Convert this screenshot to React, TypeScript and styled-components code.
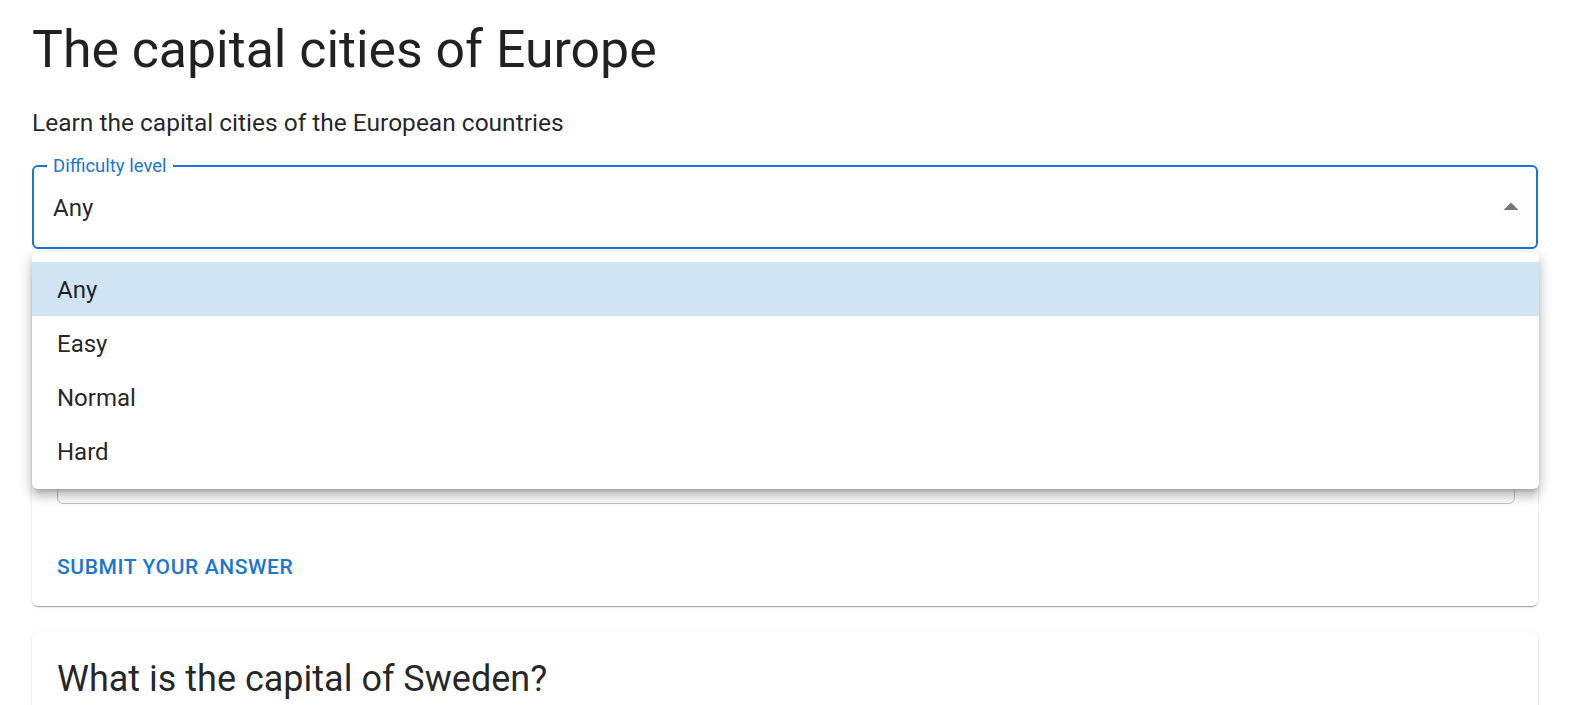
import React from "react";
import styled, { createGlobalStyle } from "styled-components";

const GlobalStyle = createGlobalStyle`
  html, body { margin: 0; padding: 0; background: #fff; overflow: hidden; }
  body { font-family: Roboto, "Liberation Sans", Arial, sans-serif; color: rgba(0,0,0,0.87); }
  * { box-sizing: border-box; }
`;

const Page = styled.main`
  padding: 20px 31px 0 32px;
  display: flex;
  flex-direction: column;
`;

const Title = styled.h1`
  margin: 0;
  font-size: 51.8px;
  font-weight: 400;
  line-height: 1.167;
`;

const Subtitle = styled.p`
  margin: 25px 0 23px;
  font-size: 24.5px;
  line-height: 1.5;
`;

const SelectBox = styled.div`
  position: relative;
  z-index: 10;
  height: 84px;
  border: 2px solid #1976d2;
  border-radius: 6px;
  display: flex;
  align-items: center;
  padding: 0 7px 0 19px;
  font-size: 24px;
`;

const SelectLabel = styled.span`
  position: absolute;
  top: -10px;
  left: 13px;
  padding: 0 6px;
  background: #fff;
  color: #1976d2;
  font-size: 18.5px;
  line-height: 18px;
`;

const SelectValue = styled.span`
  flex: 1;
  line-height: 1.5;
  padding-top: 2px;
`;

const Arrow = styled.svg`
  width: 36px;
  height: 36px;
  fill: rgba(0,0,0,0.54);
`;

const Menu = styled.ul`
  position: absolute;
  top: 85px;
  left: -2px;
  right: -3px;
  margin: 0;
  padding: 10px 0 11px;
  list-style: none;
  background: #fff;
  border-radius: 6px;
  box-shadow: 0px 5px 5px -3px rgba(0,0,0,0.2), 0px 8px 10px 1px rgba(0,0,0,0.14), 0px 3px 14px 2px rgba(0,0,0,0.12);
`;

const MenuItem = styled.li<{ $selected?: boolean }>`
  height: 54px;
  display: flex;
  align-items: center;
  padding: 2px 25px 0;
  font-size: 24px;
  background: ${(p) => (p.$selected ? "rgba(25,118,210,0.2)" : "transparent")};
`;

const Card = styled.section`
  margin-top: 26px;
  background: #fff;
  border-radius: 6px;
  box-shadow: 0px 2px 1px -1px rgba(0,0,0,0.2), 0px 1px 1px 0px rgba(0,0,0,0.14), 0px 1px 3px 0px rgba(0,0,0,0.12);
  padding: 25px 23px 17px 25px;
  display: flex;
  flex-direction: column;
`;

const Question = styled.h2`
  margin: 0;
  font-size: 36px;
  font-weight: 400;
  line-height: 1.235;
`;

const AnswerField = styled.div`
  margin-top: 75px;
  height: 84px;
  border: 1px solid rgba(0,0,0,0.23);
  border-radius: 6px;
`;

const Actions = styled.div`
  margin-top: 41px;
  display: flex;
`;

const TextButton = styled.button`
  border: 0;
  background: transparent;
  padding: 0;
  height: 44px;
  font-family: inherit;
  font-size: 21px;
  font-weight: 500;
  letter-spacing: 0.02857em;
  text-transform: uppercase;
  color: #1976d2;
  cursor: pointer;
`;

const levels = ["Any", "Easy", "Normal", "Hard"];

export default function App() {
  return (
    <>
      <GlobalStyle />
      <Page>
        <Title>The capital cities of Europe</Title>
        <Subtitle>Learn the capital cities of the European countries</Subtitle>
        <SelectBox>
          <SelectLabel>Difficulty level</SelectLabel>
          <SelectValue>Any</SelectValue>
          <Arrow viewBox="0 0 24 24">
            <path d="M7 14l5-5 5 5z" />
          </Arrow>
          <Menu>
            {levels.map((l) => (
              <MenuItem key={l} $selected={l === "Any"}>
                {l}
              </MenuItem>
            ))}
          </Menu>
        </SelectBox>
        <Card>
          <Question>What is the capital of France?</Question>
          <AnswerField />
          <Actions>
            <TextButton>Submit your answer</TextButton>
          </Actions>
        </Card>
        <Card>
          <Question>What is the capital of Sweden?</Question>
          <AnswerField />
        </Card>
      </Page>
    </>
  );
}
